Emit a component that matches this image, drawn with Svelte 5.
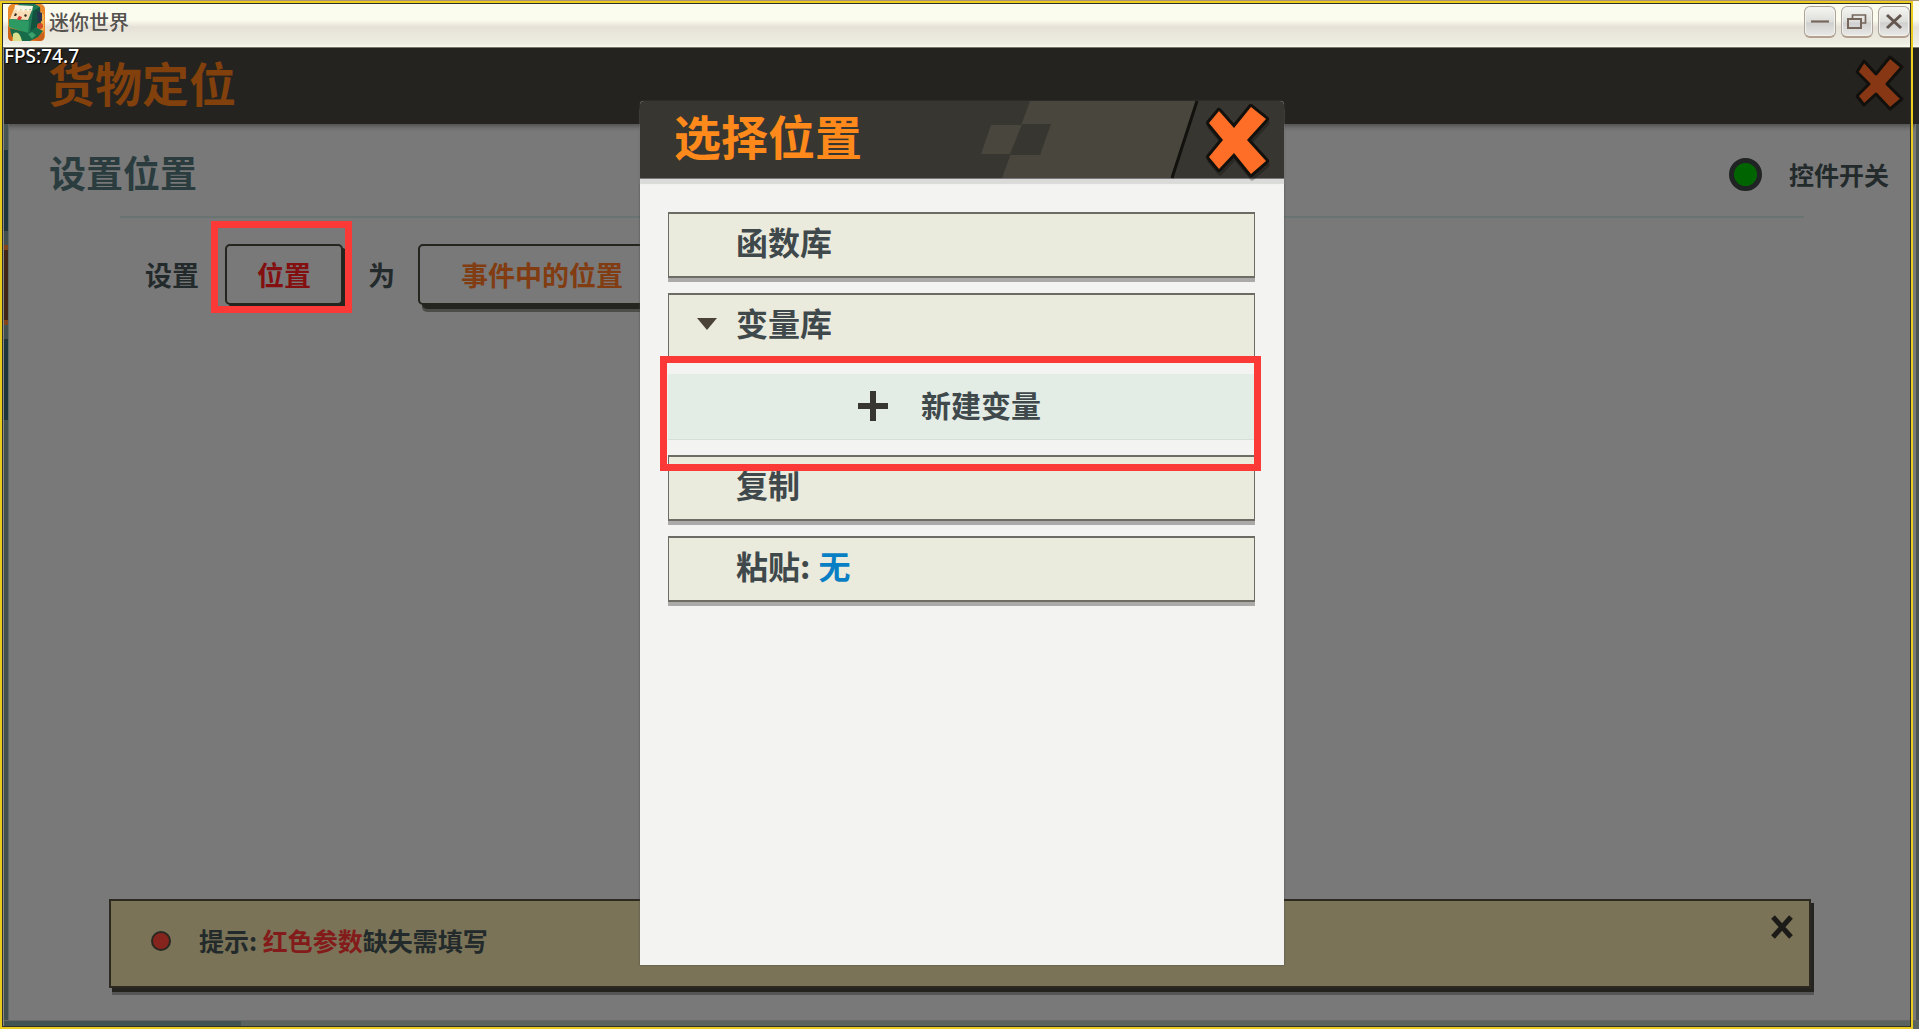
<script>
  let enabled = $state(true);
  const cross = '59,15 74,32 91,11 106,23 87,44 106,65 91,78 74,57 59,73 49,61 63,44 49,27';
  const strips = ['pale', 'deep', 'gap', 'warm', 'gap', 'deep', 'fill'];
</script>

<div class="screen">
  <header class="titlebar">
    <svg class="logo" viewBox="0 0 37 37" aria-hidden="true">
      <rect width="37" height="37" rx="5" fill="#e8882a" />
      <path d="M27 1l9 10v14l-6 8z" fill="#f3b14b" />
      <path d="M22 36l14-8v5q0 4-4 4z" fill="#c9601c" />
      <path d="M0 22l4 4v11q-4 0-4-5z" fill="#c9601c" />
      <path d="M7 4L11 0h16l5 3-3 20-9 7L1 22z" fill="#1f7a55" />
      <path d="M25 7l7-4 1 17-11 9z" fill="#12523f" />
      <path d="M6 5l18 1-4 10L2 15z" fill="#f6ddb5" />
      <path d="M7 1l18 1-1 5-2-2-2 3-2-3-3 3-2-3-3 3-2-3-2 2z" fill="#f8f4e4" />
      <path d="M7 9l2 1-1 2H6zM17 10l2 1-1 2-2-1z" fill="#3a2b20" />
      <path d="M11 12l3 1-2 4-3-2z" fill="#d5372a" />
      <path d="M1 15l20 2-1 12-19-6z" fill="#2d9963" />
      <path d="M2 24l18 5 8-6 7 4-5 6-8 4H7q-4-5-5-13z" fill="#176b49" />
      <path d="M20 30l4-2 4 3-4 4z" fill="#3aa06c" />
      <path d="M5 30q6-5 9 7H5z" fill="#d9df8c" />
      <circle cx="32" cy="22" r="3" fill="#cf4a2a" />
      <path d="M29 7l5 2v8l-4 1z" fill="#29334d" />
    </svg>
    <span class="app-name">迷你世界</span>
    <div class="window-buttons">
      <button aria-label="最小化">
        <svg viewBox="0 0 30 30"><path d="M6 14.500h18" stroke="#75675b" stroke-width="2.200" /></svg>
      </button>
      <button aria-label="还原">
        <svg viewBox="0 0 30 30" fill="none" stroke="#75675b" stroke-width="1.700">
          <path d="M10.500 11V8h13v8h-4" /><path d="M6 12h13v9H6z" stroke-width="2" />
        </svg>
      </button>
      <button aria-label="关闭窗口">
        <svg viewBox="0 0 30 30"><path d="M8 8l14 13M22 8L8 21" stroke="#64574f" stroke-width="3" /></svg>
      </button>
    </div>
  </header>

  <main class="game">
    <div class="fps">FPS:74.7</div>
    <header class="page-head">
      <h1>货物定位</h1>
      <button class="page-close" aria-label="关闭">
        <svg viewBox="0 0 55 62">
          <polygon points="11,8 23,21 37,4 49,14 34,31 49,46 37,56 23,41 11,52 4,43 16,31 4,19" fill="#873713" stroke="#11100d" stroke-width="3" stroke-linejoin="round" />
        </svg>
      </button>
    </header>

    <div class="body">
      <div class="rail" aria-hidden="true">
        {#each strips as strip}<i class={strip}></i>{/each}
      </div>
      <section class="page">
        <div class="section-head">
          <h2>设置位置</h2>
          <label class="switch">
            <input type="checkbox" bind:checked={enabled} />
            <span>控件开关</span>
          </label>
        </div>
        <hr />
        <div class="params">
          <span>设置</span>
          <div class="marked">
            <button class="param missing">位置</button>
            <i class="mark"></i>
          </div>
          <span>为</span>
          <button class="param">事件中的位置</button>
        </div>
        <aside class="tip">
          <i class="dot"></i>
          <p>提示: <em>红色参数</em>缺失需填写</p>
          <button aria-label="关闭提示">
            <svg viewBox="0 0 24 24"><path d="M3 2l18 20M21 2L3 22" stroke="#1c1b18" stroke-width="5" /></svg>
          </button>
        </aside>
      </section>
      <div class="edge" aria-hidden="true"></div>
    </div>
    <div class="ground" aria-hidden="true"></div>

    <div class="overlay">
      <div class="dialog" role="dialog" aria-labelledby="dialog-title">
        <header>
          <svg class="pattern" viewBox="0 0 284 77" aria-hidden="true">
            <path d="M30 0h166l-25 77H2z" fill="#49463e" />
            <path d="M-9 24h31L10 53h-29z" fill="#49463e" />
            <path d="M22 23h29L40 54H10z" fill="#383631" />
            <path d="M197 0l-25 77" stroke="#12110e" stroke-width="3" />
          </svg>
          <h2 id="dialog-title">选择位置</h2>
          <button class="dialog-close" aria-label="关闭">
            <svg viewBox="44 6 67 80">
              <polygon points={cross} transform="translate(1 4)" fill="#000" stroke="#000" stroke-width="5" stroke-linejoin="round" opacity=".25" />
              <polygon points={cross} fill="#ff6e26" stroke="#12110e" stroke-width="6" stroke-linejoin="round" paint-order="stroke" />
            </svg>
          </button>
        </header>
        <ul>
          <li><button class="item">函数库</button></li>
          <li>
            <button class="item open" aria-expanded="true">
              <svg class="arrow" viewBox="0 0 20 12"><path d="M0 0h20L10 12z" fill="#4a4237" /></svg>
              变量库
            </button>
          </li>
          <li class="marked">
            <button class="item create">
              <svg viewBox="0 0 30 30"><path d="M15 0v30M0 15h30" stroke="#383631" stroke-width="6" /></svg>
              <span>新建变量</span>
            </button>
            <i class="mark wide"></i>
          </li>
          <li><button class="item">复制</button></li>
          <li><button class="item">粘贴:<span class="none">无</span></button></li>
        </ul>
      </div>
    </div>
  </main>
  <div class="frame" aria-hidden="true"></div>
</div>

<style>
  :global(body) { margin: 0; }
  .screen, .screen * { box-sizing: border-box; }
  .screen {
    position: relative;
    display: flex;
    flex-direction: column;
    min-height: 100vh;
    background: #8e8d84;
    font-family: "Noto Sans CJK SC", sans-serif;
    font-weight: 700;
    color: #232a2b;
    overflow: hidden;
  }
  h1, h2, p, ul { margin: 0; padding: 0; font-weight: 700; }
  button { font: inherit; color: inherit; border: 0; padding: 0; background: none; cursor: pointer; }
  svg { display: block; }
  i { display: block; }

  .titlebar {
    display: flex;
    align-items: center;
    height: 48px;
    padding: 0 9px 4px 8px;
    border-top: 1px solid #aa9276;
    border-bottom: 1px solid #77776b;
    background: linear-gradient(#fbfcee 0 19px, #e6e1d7 26px, #eeeee2 43px, #fbfcf0 46px);
  }
  .logo { width: 37px; height: 37px; }
  .app-name { margin-left: 4px; font-size: 20px; line-height: 30px; font-weight: 500; color: #55524f; }
  .window-buttons { display: flex; gap: 5px; margin-left: auto; }
  .window-buttons button {
    width: 32px;
    height: 32px;
    border: 1px solid #aaa49d;
    border-bottom: 2px solid #b3a08e;
    border-radius: 6px;
    background: linear-gradient(#f5f5f2, #dededb 50%, #d0d0d0 55%, #e9e9e7);
    box-shadow: inset 0 0 0 1px #f3f1ed;
  }

  .game { position: relative; flex: 1; display: flex; flex-direction: column; margin-left: 4px; }
  .fps {
    position: absolute;
    top: 0;
    left: 0;
    font: 500 19px/16px "Noto Sans", sans-serif;
    color: #fff;
    text-shadow: 1px 1px 1px #000;
  }
  .page-head {
    display: flex;
    align-items: center;
    justify-content: space-between;
    height: 76px;
    padding: 0 11px 4px 44px;
    background: #25231f;
  }
  .page-head h1 { padding-bottom: 4px; font-size: 47px; line-height: 48px; color: #81400c; }
  .page-close svg { width: 55px; height: 62px; }

  .body { flex: 1; display: flex; background: #797979; box-shadow: inset 0 6px 4px -3px #555; }
  .rail { display: flex; flex-direction: column; width: 5px; background: #42514f; border-right: 1px solid #626866; }
  .pale { height: 26px; background: #465554; }
  .deep { height: 81px; background: #1f353c; }
  .gap { height: 14px; }
  .warm { height: 80px; background: #3f2518; border: solid #82441a; border-width: 5px 0; }
  .fill { flex: 1; }
  .edge { width: 4px; background: #4b5450; border-left: 1px solid #777; }
  .page { flex: 1; display: flex; flex-direction: column; }
  .section-head { display: flex; align-items: center; justify-content: space-between; height: 92px; padding: 8px 26px 0 40px; }
  .section-head h2 { padding-bottom: 5px; font-size: 37px; line-height: 56px; color: #2a3c3e; }
  .switch { display: flex; align-items: center; gap: 27px; font-size: 25px; line-height: 36px; }
  .switch input {
    appearance: none;
    width: 33px;
    height: 33px;
    margin: 0;
    border: 5px solid #202323;
    border-radius: 50%;
    background: #4a4a4a;
  }
  .switch input:checked { background: #006400; }
  hr { width: auto; height: 2px; margin: 0 111px; border: 0; background: #697472; }
  .params { display: flex; align-items: center; padding: 26px 0 0 136px; font-size: 27px; line-height: 40px; }
  .params .marked { margin: 0 25px 0 26px; }
  .param {
    height: 61px;
    padding: 0 41px;
    border: 2px solid #25251f;
    border-radius: 5px;
    box-shadow: 4px 4px 0 #25251f, 4px 7px 0 #4c4c4a;
    background: #797979;
    color: #823c12;
  }
  .params > .param { margin-left: 23px; }
  .missing { padding: 0 30px; color: #830f10; box-shadow: 4px 4px 0 #25251f; }
  .marked { position: relative; }
  .mark { position: absolute; inset: -23px -9px -8px -14px; border: 7px solid #fb3a38; pointer-events: none; }
  .tip {
    display: flex;
    align-items: center;
    height: 89px;
    margin: auto 104px 32px 100px;
    padding: 0 15px 6px 40px;
    border: 2px solid #2b2920;
    background: #7a7357;
    box-shadow: 3px 4px 0 #25231f, 3px 7px 0 #555;
    font-size: 25px;
    line-height: 36px;
  }
  .dot { width: 20px; height: 20px; border: 2px solid #292820; border-radius: 50%; background: #84241d; }
  .tip p { margin-left: 28px; padding-bottom: 2px; }
  .tip em { font-style: normal; color: #841b1b; }
  .tip button { margin-left: auto; align-self: flex-start; padding-top: 13px; }
  .tip svg { width: 24px; height: 26px; }
  .ground { height: 9px; background: linear-gradient(90deg, #425353 237px, #5a635d 237px); border-top: 1px solid #666; }

  .overlay { position: absolute; inset: 53px 0 16px; display: flex; justify-content: center; align-items: stretch; padding-left: 1px; }
  .dialog {
    width: 644px;
    margin-bottom: 48px;
    border-radius: 4px 4px 0 0;
    background: #f3f3f2;
    box-shadow: 0 0 2px #444;
    color: #3f494b;
  }
  .dialog header {
    position: relative;
    display: flex;
    align-items: center;
    justify-content: space-between;
    height: 77px;
    padding: 0 13px 4px 34px;
    border-radius: 4px 4px 0 0;
    background: #383631;
    box-shadow: 0 1px 0 #77767a, 0 6px 1px #dadad9;
  }
  .pattern { position: absolute; top: 0; right: 0; width: 284px; height: 77px; overflow: visible; }
  .dialog h2 { position: relative; padding-bottom: 6px; font-size: 47px; line-height: 64px; color: #ff8a1b; }
  .dialog-close { position: relative; margin-bottom: -8px; }
  .dialog-close svg { width: 67px; height: 80px; }
  .dialog ul { display: grid; gap: 15px; padding: 34px 29px 0 28px; list-style: none; }
  .item {
    display: flex;
    align-items: center;
    width: 100%;
    height: 66px;
    padding: 0 0 8px 67px;
    border: 2px solid #6c6b64;
    border-width: 2px 1px;
    background: #ebebdd;
    box-shadow: 0 4px 0 #abaaa8;
    font-size: 32px;
    line-height: 46px;
    text-align: left;
  }
  .open { padding-left: 28px; gap: 19px; box-shadow: none; }
  .arrow { width: 20px; height: 12px; margin-top: 4px; }
  .create {
    gap: 33px;
    padding: 0 0 2px 190px;
    border: 0;
    border-bottom: 1px solid #d5dfd8;
    background: #e3ece5;
    box-shadow: none;
    font-size: 30px;
  }
  .create span { padding-bottom: 4px; }
  .create svg { width: 30px; height: 30px; }
  .none { margin-left: 8px; color: #087fc4; }
  .wide { inset: -18px -6px -31px -8px; z-index: 1; }

  .frame {
    position: absolute;
    inset: 1px 6px 0 0;
    border: 2px solid #e9cc1d;
    box-shadow: inset 0 0 0 1px #30302c;
    pointer-events: none;
    z-index: 2;
  }
</style>
